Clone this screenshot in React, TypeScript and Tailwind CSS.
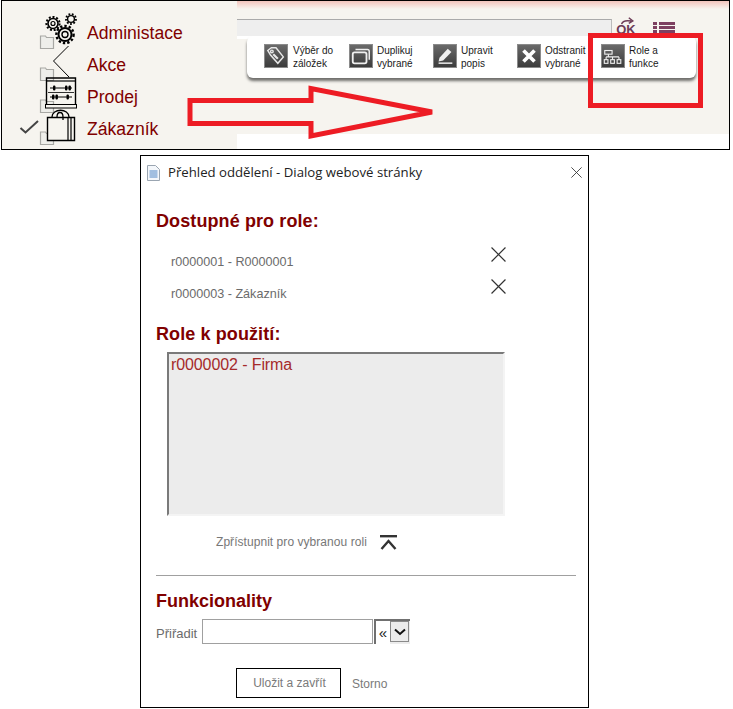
import React from 'react';

const font = { arial: 'font-["Liberation_Sans",Arial,sans-serif]' };

const menuItems = ['Administace', 'Akce', 'Prodej', 'Zákazník'];

const ToolIcon = ({ children }: { children: React.ReactNode }) => (
    <div className="w-6 h-6 shrink-0 bg-gradient-to-b from-[#6a6a6a] to-[#3c3c3c] border border-[#8a8a8a]">
        <svg viewBox="0 0 24 24" className="w-full h-full">{children}</svg>
    </div>
);

const tools: { label: string[]; width: string; gap: string; icon: React.ReactNode }[] = [
    {
        label: ['Výběr do', 'záložek'],
        width: 'w-[85px]',
        gap: 'gap-[5px]',
        icon: (
            <g fill="none" stroke="#e8e8e8" strokeWidth="1.6">
                <path d="M3 6l4-3 5 0 8 10-6 7-8-9z" />
                <circle cx="7.5" cy="7" r="1.4" />
                <path d="M9 10l5 5" strokeWidth="2.4" />
            </g>
        ),
    },
    {
        label: ['Duplikuj', 'vybrané'],
        width: 'w-[84px]',
        gap: 'gap-[4px]',
        icon: (
            <g fill="none" stroke="#f0f0f0" strokeWidth="1.6">
                <rect x="3" y="8" width="15" height="12" rx="2" strokeWidth="2" />
                <path d="M6 5h13a2 2 0 0 1 2 2v9" />
            </g>
        ),
    },
    {
        label: ['Upravit', 'popis'],
        width: 'w-[84px]',
        gap: 'gap-[4px]',
        icon: (
            <g fill="#f0f0f0">
                <path d="M6 14L15 4l4 3.5-9 9.5-5 1z" />
                <rect x="5" y="19" width="15" height="1.6" />
            </g>
        ),
    },
    {
        label: ['Odstranit', 'vybrané'],
        width: 'w-[84px]',
        gap: 'gap-[4px]',
        icon: <path d="M6 6l12 12M18 6L6 18" stroke="#ffffff" strokeWidth="4" fill="none" />,
    },
    {
        label: ['Role a', 'funkce'],
        width: 'w-[80px]',
        gap: 'gap-[4px]',
        icon: (
            <g fill="none" stroke="#f0f0f0" strokeWidth="1.2">
                <rect x="3" y="6" width="8" height="4" />
                <path d="M7 10v3M4.5 13h14M4.5 13v3M11.5 13v3M18.5 13v3" />
                <rect x="2.5" y="16" width="4" height="4" />
                <rect x="9.5" y="16" width="4" height="4" />
                <rect x="16.5" y="16" width="4" height="4" />
            </g>
        ),
    },
];

// check mark, folders and the black pictograms of the side menu, drawn in page coordinates
const MenuArt = () => (
    <svg viewBox="0 0 80 149" className="absolute left-[-2px] top-[-1px] w-[80px] h-[149px]">
        {[35, 67, 99, 131].map((y) => (
            <g key={y} fill="#eeeeea" stroke="#a8a8a4" strokeWidth="1.2">
                <path d={`M40.5 ${y + 1}h5l1 1.5h7v11h-13z`} />
            </g>
        ))}
        <path d="M20.5 128l5 4.5L38 121" fill="none" stroke="#444" strokeWidth="2" />
        <g fill="none" stroke="#000">
            <circle cx="65" cy="34.5" r="6.5" strokeWidth="2" />
            <circle cx="65" cy="34.5" r="3" strokeWidth="1.4" />
            <circle cx="65" cy="34.5" r="8.6" strokeWidth="2.4" strokeDasharray="2.4 2" />
            <circle cx="53" cy="23.5" r="5" strokeWidth="1.6" />
            <circle cx="53" cy="23.5" r="2" strokeWidth="1.2" />
            <circle cx="53" cy="23.5" r="6.6" strokeWidth="2" strokeDasharray="2 1.8" />
            <circle cx="71" cy="19" r="3.4" strokeWidth="1.4" />
            <circle cx="71" cy="19" r="5" strokeWidth="1.8" strokeDasharray="1.8 1.6" />
            <path d="M68.5 46L53.5 61l15.5 16" strokeWidth="1" />
            <path d="M46.5 105V78h29v27" strokeWidth="1.4" />
            <path d="M47 81h28" strokeWidth="1.2" />
            <path d="M50 88h22M50 97h22" strokeWidth="1" />
            <path d="M48 92.5h26" strokeWidth="0.8" />
            <rect x="45.5" y="104.5" width="31" height="3.5" strokeWidth="1" fill="#f6f4ef" />
            <path d="M47.5 140.5v-23h27v23z" strokeWidth="1.4" fill="#f6f4ef" />
            <path d="M52 117c0-9 17-9 17 0M57 117c0-6 6-6 6 0v3" strokeWidth="1.3" />
            <path d="M68 118v22M71 118v22" strokeWidth="1.2" />
        </g>
        <g fill="#000">
            <rect x="53" y="85.5" width="2.4" height="5" rx="1" />
            <rect x="65" y="85.5" width="2.4" height="5" rx="1" />
            <rect x="68.5" y="85.5" width="2.4" height="5" rx="1" />
            <rect x="52" y="94.5" width="2.4" height="5" rx="1" />
            <rect x="55.5" y="94.5" width="2.4" height="5" rx="1" />
            <rect x="66.5" y="94.5" width="2.4" height="5" rx="1" />
        </g>
    </svg>
);

const CloseIcon = ({ size }: { size: string }) => (
    <svg viewBox="0 0 14 14" className={size}>
        <path d="M0.5 0.5l13 13M13.5 0.5l-13 13" stroke="#333" strokeWidth="1.1" fill="none" />
    </svg>
);

const roles = ['r0000001 - R0000001', 'r0000003 - Zákazník'];

export default function App() {
    return (
        <div className={`relative w-[733px] h-[709px] bg-white overflow-hidden ${font.arial}`}>
            {/* top screenshot panel */}
            <div className="relative ml-px w-[729px] h-[150px] border border-black flex bg-white">
                <div className="relative w-[235px] bg-[#f6f4ef] pt-4">
                    <MenuArt />
                    {menuItems.map((item) => (
                        <div key={item} className="relative h-8 pl-[85px] flex items-center text-[17.6px] text-[#800000]">
                            {item}
                        </div>
                    ))}
                </div>
                <div className="flex-1 min-w-0 flex flex-col">
                    <div className="relative h-[133px] bg-[#f6f4ef] bg-gradient-to-b from-[#f2c4bc] to-[#f6f4ef] bg-[length:100%_8px] bg-no-repeat">
                        <div className="absolute left-0 top-[18px] w-[375px] h-[17px] bg-[#eeeeee] border-t border-t-[#aaaaaa] border-r border-r-[#bbbbbb]" />
                        <div className="absolute left-0 top-[35px] w-[375px] h-[3px] bg-white" />
                        <div className="absolute left-[379px] top-[22px] w-[20px] h-[14px] text-[#6d3b56] font-bold text-[13px] leading-[14px] text-center">
                            OK
                        </div>
                        <svg viewBox="0 0 20 8" className="absolute left-[383px] top-[16px] w-[16px] h-[8px]">
                            <path d="M2 8c1-4 6-5 12-4M11 0l5 4-5 3" fill="none" stroke="#6d3b56" strokeWidth="1.8" />
                        </svg>
                        <div className="absolute left-[416px] top-[21px] w-[22px] h-[11px] flex flex-col justify-between">
                            <div className="h-[3px] bg-[#7d3f60] ml-[6px]" />
                            <div className="h-[3px] bg-[#7d3f60] ml-[6px]" />
                            <div className="h-[3px] bg-[#7d3f60] ml-[6px]" />
                        </div>
                        <div className="absolute left-[416px] top-[21px] w-[4px] h-[11px] flex flex-col justify-between">
                            <div className="h-[3px] bg-[#7d3f60]" />
                            <div className="h-[3px] bg-[#7d3f60]" />
                            <div className="h-[3px] bg-[#7d3f60]" />
                        </div>
                        <div className="absolute left-[10px] top-[35px] w-[449px] h-[42px] bg-white rounded-[6px] shadow-[0_3px_3px_rgba(0,0,0,0.55)] flex items-center pl-[17px]">
                            {tools.map((tool) => (
                                <div key={tool.label[0]} className={`${tool.width} ${tool.gap} shrink-0 flex items-start`}>
                                    <ToolIcon>{tool.icon}</ToolIcon>
                                    <div className="text-[10px] leading-[13px] text-[#1a1a1a] whitespace-nowrap">
                                        {tool.label.map((line) => (
                                            <div key={line}>{line}</div>
                                        ))}
                                    </div>
                                </div>
                            ))}
                        </div>
                    </div>
                    <div className="flex-1 bg-white" />
                </div>
            </div>

            {/* annotations drawn over the panel */}
            <div className="absolute left-[588px] top-[33px] w-[115px] h-[75px] border-[5px] border-[#ed1c24]" />
            <svg viewBox="0 0 733 150" className="absolute left-0 top-0 w-[733px] h-[150px]">
                <path d="M190 100.5H311V88.5L432 112 311 136V123.5H190z" fill="none" stroke="#ed1c24" strokeWidth="5" />
            </svg>

            {/* dialog */}
            <div className="mt-[5px] ml-[140px] w-[449px] h-[553px] border border-black flex flex-col">
                <div className="h-[33px] shrink-0 flex items-center pl-[5px] pr-[6px] font-['Open_Sans',sans-serif] text-[13.2px] text-[#222]">
                    <svg viewBox="0 0 15 16" className="w-[15px] h-[16px] mr-[7px]">
                        <path d="M1.5 .5h8l4 4v11h-12z" fill="#f4f7fb" stroke="#9aa5b1" />
                        <path d="M3.5 6h8M3.5 8h8M3.5 10h8M3.5 12h8" stroke="#4f86c6" />
                    </svg>
                    <span className="flex-1">Přehled oddělení - Dialog webové stránky</span>
                    <CloseIcon size="w-[11px] h-[11px]" />
                </div>
                <div className="pl-[15px] pr-[12px] flex-1 flex flex-col">
                    <h2 className="mt-[22px] h-[21px] leading-[21px] text-[18px] tracking-[0.1px] font-bold text-[#800000]">Dostupné pro role:</h2>
                    <div className="mt-[14px] pl-[15px] w-[350px]">
                        {roles.map((role) => (
                            <div key={role} className="h-8 flex items-center justify-between text-[12.6px] text-[#6b6b6b]">
                                <span>{role}</span>
                                <CloseIcon size="w-[15px] h-[15px] -mt-[16px] mr-0" />
                            </div>
                        ))}
                    </div>
                    <h2 className="mt-[14px] h-[21px] leading-[21px] text-[18px] tracking-[0.1px] font-bold text-[#800000]">Role k použití:</h2>
                    <div className="mt-[7px] ml-[11px] w-[338px] h-[164px] bg-[#ececec] border-2 border-t-[#7a7a7a] border-l-[#7a7a7a] border-r-[#f4f4f4] border-b-[#f4f4f4] pl-[2px] pt-[2px] text-[16px] tracking-[-0.1px] leading-[18px] text-[#a52a2a]">
                        r0000002 - Firma
                    </div>
                    <div className="mt-[16px] h-[20px] pl-[60px] flex items-center gap-[13px] text-[12px] tracking-[0.05px] text-[#777]">
                        <span>Zpřístupnit pro vybranou roli</span>
                        <svg viewBox="0 0 17 15" className="w-[17px] h-[15px]">
                            <path d="M0 1.2h17" stroke="#333" strokeWidth="2.4" />
                            <path d="M1.5 14L8.5 6l7 8" stroke="#333" strokeWidth="2.4" fill="none" />
                        </svg>
                    </div>
                    <div className="mt-[23px] h-px w-[420px] bg-[#a0a0a0]" />
                    <h2 className="mt-[15px] h-[20px] leading-[20px] text-[18px] font-bold text-[#800000]">Funkcionality</h2>
                    <div className="mt-[8px] flex items-center text-[13px] text-[#6b6b6b]">
                        <span className="w-[46px] pt-[5px]">Přiřadit</span>
                        <div className="w-[171px] h-[25px] border border-[#a0a0a0] bg-white" />
                        <div className="w-[36px] h-[25px] ml-px bg-[#ececec] border-t-2 border-l-2 border-[#707070] flex">
                            <div className="w-[14px] bg-white text-[#222] text-[15px] text-center leading-[23px]">«</div>
                            <div className="w-[19px] h-[21px] bg-[#ececec] border border-[#8a8a8a] flex items-center justify-center">
                                <svg viewBox="0 0 12 8" className="w-[12px] h-[8px]">
                                    <path d="M1 1.5l5 4.5 5-4.5" stroke="#111" strokeWidth="2" fill="none" />
                                </svg>
                            </div>
                        </div>
                    </div>
                    <div className="mt-[24px] flex items-center pl-[80px] text-[12px] text-[#7a7a7a]">
                        <div className="w-[105px] h-[30px] border border-black flex items-center justify-center pl-[2px]">Uložit a zavřít</div>
                        <span className="ml-[11px] pt-[1px]">Storno</span>
                    </div>
                </div>
            </div>
        </div>
    );
}
